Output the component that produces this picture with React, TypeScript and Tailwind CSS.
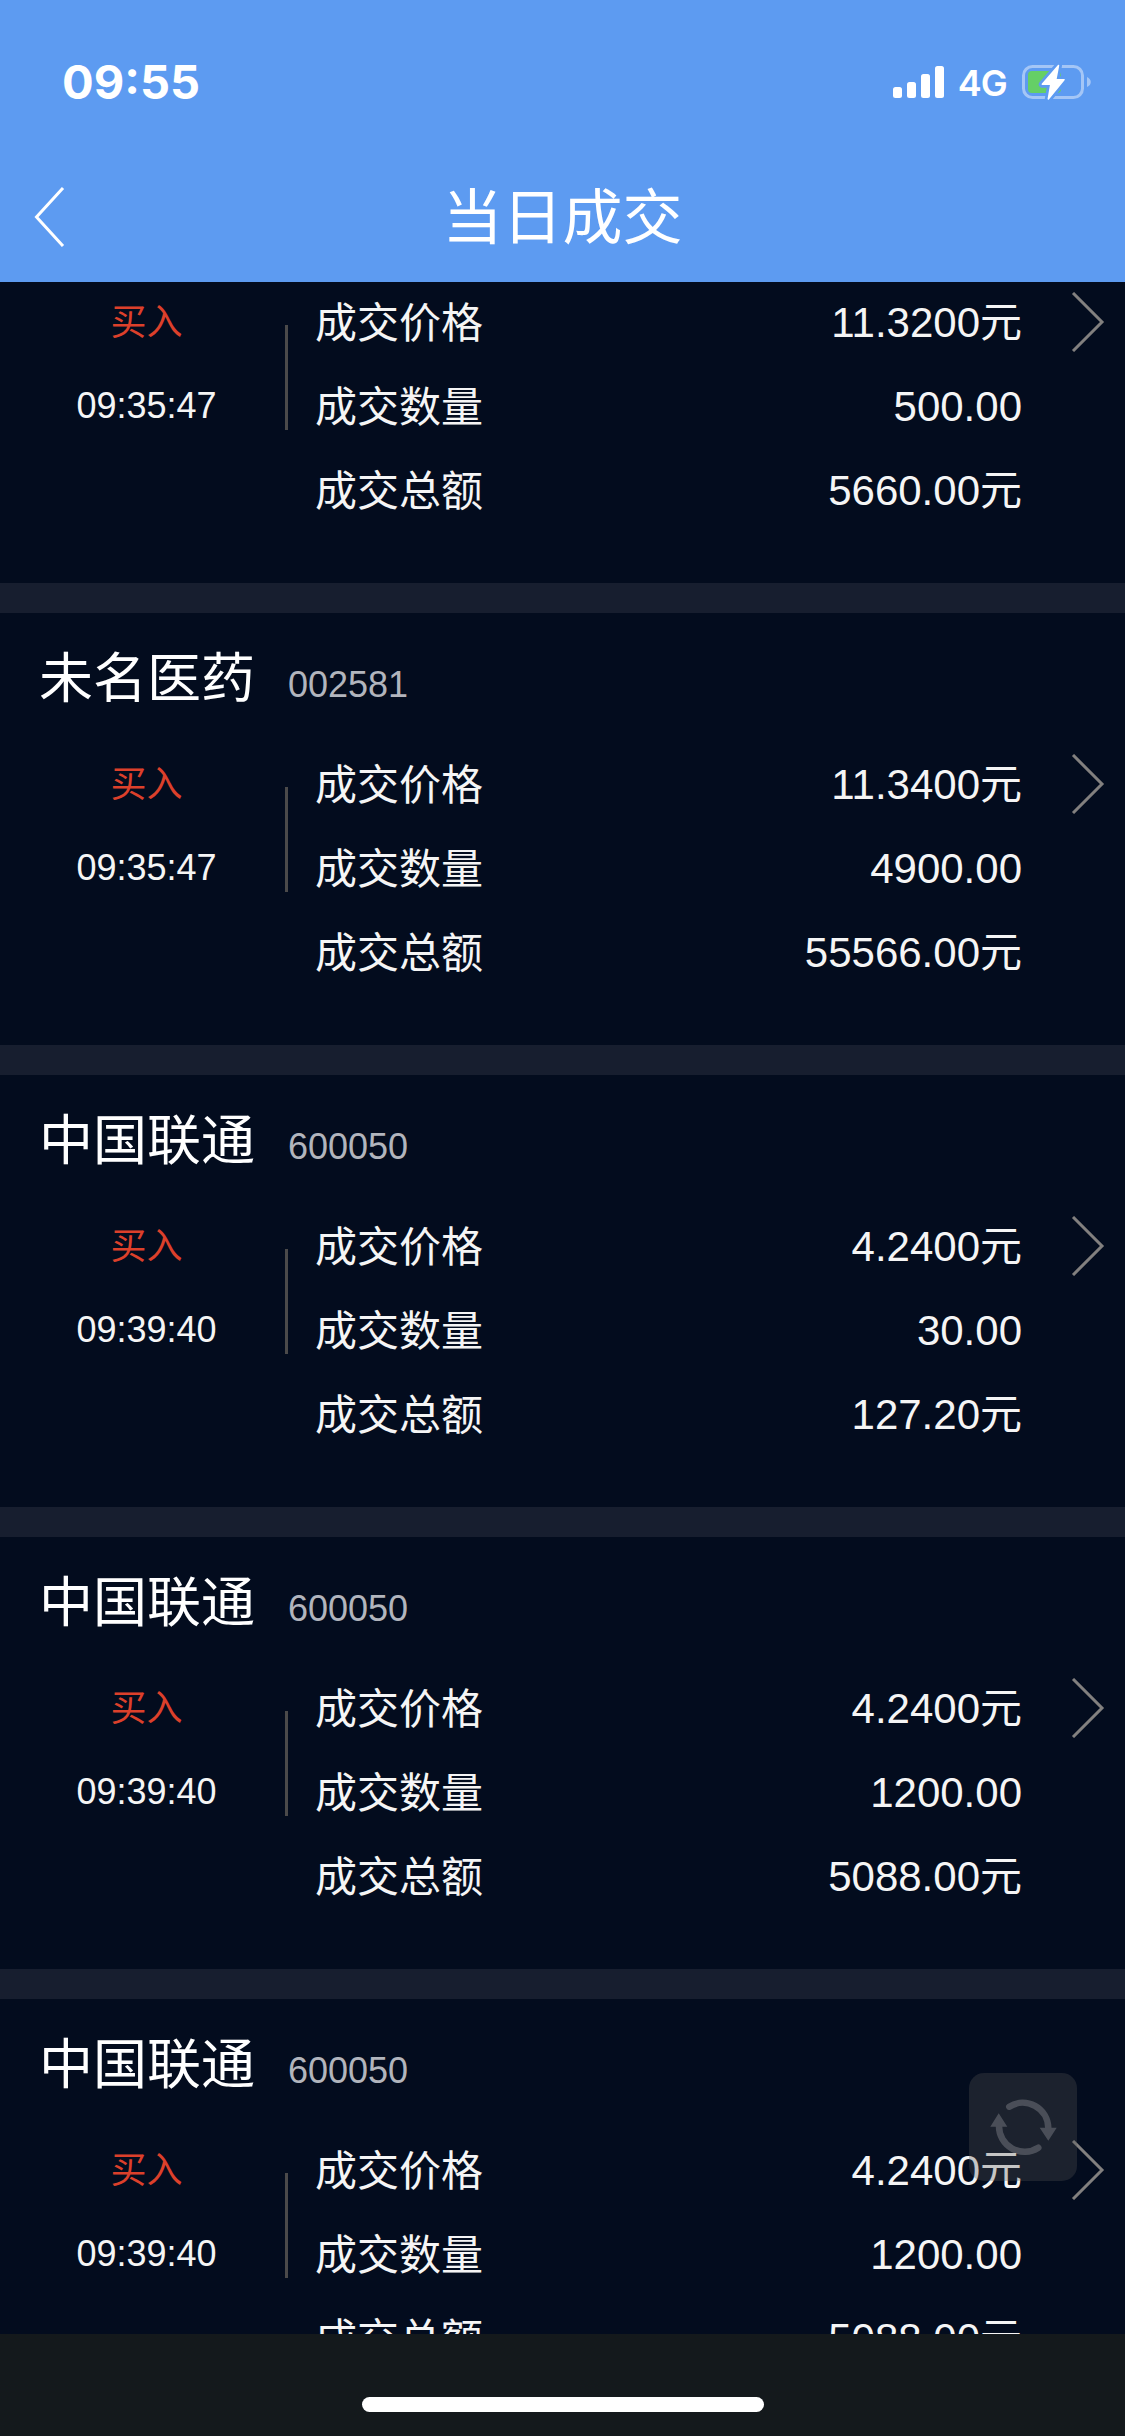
import React from 'react'

interface Trade {
  name?: string
  code?: string
  side: string
  time: string
  price: string
  count: string
  total: string
}

// the first card is scrolled up past its title row
const trades: Trade[] = [
  { side: '买入', time: '09:35:47', price: '11.3200元', count: '500.00', total: '5660.00元' },
  { name: '未名医药', code: '002581', side: '买入', time: '09:35:47', price: '11.3400元', count: '4900.00', total: '55566.00元' },
  { name: '中国联通', code: '600050', side: '买入', time: '09:39:40', price: '4.2400元', count: '30.00', total: '127.20元' },
  { name: '中国联通', code: '600050', side: '买入', time: '09:39:40', price: '4.2400元', count: '1200.00', total: '5088.00元' },
  { name: '中国联通', code: '600050', side: '买入', time: '09:39:40', price: '4.2400元', count: '1200.00', total: '5088.00元' },
]

const BOLT = 'M37.5 2.5 L21.3 21.3 H29.8 L27.3 36 L43 16.7 H34.8 Z'

const Battery: React.FC = () => (
  <svg width="72" height="38" viewBox="0 0 72 38" fill="none" className="ml-[14px]">
    <rect x="2.5" y="3.5" width="59" height="31" rx="9" stroke="#a4c6f6" strokeWidth="3" />
    <path d="M66 14 C71 16 71 22 66 24 Z" fill="#a4c6f6" />
    <rect x="7" y="8" width="33" height="22" rx="4" fill="#65cf66" />
    <path d={BOLT} fill="#5d9bf1" stroke="#5d9bf1" strokeWidth="7" strokeLinejoin="round" />
    <path d={BOLT} fill="#fff" stroke="#fff" strokeWidth="1.5" strokeLinejoin="round" />
  </svg>
)

const StatusBar: React.FC = () => (
  <div className="flex h-[150px] items-start justify-between pl-[62px] pr-[32px] pt-[55px] font-['Inter',sans-serif] text-white">
    <span className="text-[47px] leading-[54px] font-bold">09:55</span>
    <div className="flex h-[54px] items-center">
      <svg width="52" height="32" viewBox="0 0 52 32" fill="#fff">
        <rect x="0" y="21" width="9" height="11" rx="2.5" />
        <rect x="14" y="16" width="9" height="16" rx="2.5" />
        <rect x="28" y="8" width="9" height="24" rx="2.5" />
        <rect x="42" y="0" width="9" height="32" rx="2.5" />
      </svg>
      <span className="ml-[13px] pt-[2px] text-[36px] leading-[52px] font-semibold tracking-[-0.8px]">4G</span>
      <Battery />
    </div>
  </div>
)

const Header: React.FC = () => (
  <header className="h-[282px] shrink-0 bg-[#5d9bf1]">
    <StatusBar />
    <div className="flex h-[132px] items-center px-[34px]">
      <svg width="32" height="60" viewBox="0 0 32 60" fill="none" stroke="#fff" strokeWidth="3" className="mt-[2px]">
        <path d="M29 1 L2.5 30 L29 59" />
      </svg>
      <h1 className="mr-[32px] flex-1 pt-[6px] text-center text-[60px] leading-[84px] text-white">当日成交</h1>
    </div>
  </header>
)

const Row: React.FC<{ label: string; value: string }> = ({ label, value }) => (
  <div className="flex h-[84px] items-center justify-between pt-[3px] text-[42px] leading-[60px] text-[#f5f5f5]">
    <span>{label}</span>
    <span className="pb-[2px]">{value}</span>
  </div>
)

const TradeCard: React.FC<{ trade: Trade }> = ({ trade }) => (
  <section className="shrink-0 border-b-[30px] border-[#171e2f] pb-[51px]">
    {trade.name && (
      <div className="flex h-[129px] items-start pl-[39px] pt-[26px]">
        <h2 className="text-[54px] leading-[80px] text-white">{trade.name}</h2>
        <span className="ml-[33px] pt-[25px] text-[36px] leading-[41px] text-[#b2b5bd]">{trade.code}</span>
      </div>
    )}
    <div className="flex">
      <div className="w-[285px] pl-[8px] text-center text-[36px] leading-[50px]">
        <div className="flex h-[84px] items-center justify-center pt-[2px] text-[#dc402b]">{trade.side}</div>
        <div className="flex h-[84px] items-center justify-center text-[#f5f5f5]">{trade.time}</div>
      </div>
      <div className="mt-[45px] h-[105px] w-[3px] bg-[#4b4a4a]" />
      <div className="ml-[27px] w-[707px]">
        <Row label="成交价格" value={trade.price} />
        <Row label="成交数量" value={trade.count} />
        <Row label="成交总额" value={trade.total} />
      </div>
      <svg width="34" height="60" viewBox="0 0 34 60" fill="none" stroke="#82807f" strokeWidth="3" className="mt-[12px] ml-[49px]">
        <path d="M2 1 L31 30 L2 59" />
      </svg>
    </div>
  </section>
)

const RefreshButton: React.FC = () => (
  <button className="absolute top-[1791px] left-[969px] h-[108px] w-[108px] rounded-[15px] bg-[#555555]/30">
    <svg width="108" height="108" viewBox="0 0 108 108" fill="none" className="opacity-20">
      <path d="M40.3 33.7 A25.5 25.5 0 0 1 79.3 55" stroke="#fff" strokeWidth="6.5" strokeLinecap="round" />
      <path d="M69.3 74.7 A25.5 25.5 0 0 1 30 53" stroke="#fff" strokeWidth="6.5" strokeLinecap="round" />
      <path d="M70.7 54.7 H87.7 L79.3 67.7 Z M21.3 53.7 H38.3 L29.7 40.3 Z" fill="#fff" />
    </svg>
  </button>
)

const App: React.FC = () => {
  return (
    <div className="flex h-[2436px] w-[1125px] flex-col overflow-hidden bg-[#030c1e] font-['Liberation_Sans','Noto_Sans_CJK_SC',sans-serif]">
      <Header />
      <main className="relative h-[2052px] shrink-0 overflow-hidden">
        <div className="-mt-[2px] flex flex-col">
          {trades.map((t, i) => (
            <TradeCard key={i} trade={t} />
          ))}
        </div>
        <RefreshButton />
      </main>
      <footer className="flex flex-1 justify-center bg-[#14191c] pt-[63px]">
        <div className="h-[15px] w-[402px] rounded-full bg-white" />
      </footer>
    </div>
  )
}

export default App
